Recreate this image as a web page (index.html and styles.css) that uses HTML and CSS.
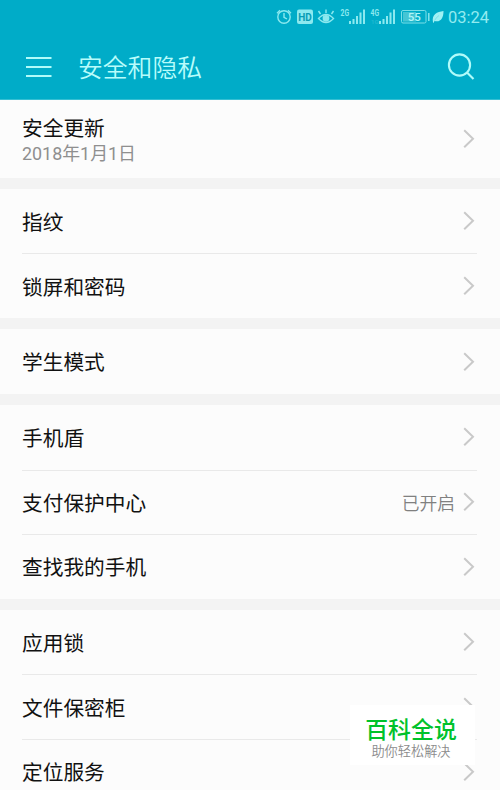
FILE: index.html
```
<!DOCTYPE html>
<html lang="zh-CN">
<head>
<meta charset="utf-8">
<title>安全和隐私</title>
<link rel="stylesheet" href="styles.css">
</head>
<body>
<svg class="defs" width="0" height="0"><defs>
<symbol id="chev" viewBox="0 0 12 20"><path d="M1.2 1.2 10 9.700 1.2 18.2" fill="none" stroke="#c9c9c9" stroke-width="2"/></symbol>
</defs></svg>
<header class="header">
<div class="status">
<svg class="icons" width="178" height="24" viewBox="270 5 178 24" fill="none" stroke="#8ce9ef" stroke-width="1.4">
<circle cx="284" cy="17" r="6.2"/><path d="M284 13v4.3l3 1.7M277 13.2l3-3M291 13.2l-3-3"/>
<rect x="297" y="9.5" width="16" height="14.5" rx="2" fill="#8ce9ef" stroke="none"/>
<text class="hd" x="298.2" y="20.500">HD</text>
<path d="M318.5 18.5q7.5-8 15 0-7.500 8-15 0ZM326 13V9.500M320.500 14l-2-3M331.500 14l2-3"/><circle cx="326" cy="18.300" r="2.700" fill="#8ce9ef"/>
<text class="net" x="340.500" y="16" textLength="8.500" lengthAdjust="spacingAndGlyphs">2G</text>
<path stroke-width="2" d="M350 24v-3M353.500 24v-5M357 24v-8M360.500 24V12.500M364 24V9.500"/>
<text class="net" x="370.500" y="16" textLength="8.500" lengthAdjust="spacingAndGlyphs">4G</text>
<text class="faint" x="371" y="23.500">1G</text>
<path stroke-width="2" d="M380 24v-3M383.500 24v-5M387 24v-8M390.500 24V12.500M394 24V9.500"/>
<rect x="401.500" y="10.500" width="24.500" height="12.500" rx="1.500" stroke-width="1" stroke="#7adfe8"/>
<rect x="403" y="12" width="13" height="9.500" fill="#45c5d4" stroke="none"/>
<text class="bat" x="407.800" y="21">55</text>
<path d="M428.800 13v8"/>
<path d="M433 22.500C431.500 14 437 12 443.500 11 443.500 18.500 440.500 22.500 434.500 21L433.500 23Z" fill="#a0f1f4" stroke="none"/>
<path d="M434.500 20.500q2-3.500 4.500-5" stroke="#5fd3df" stroke-width=".6"/>
</svg>
<span class="time">03:24</span>
</div>
<div class="bar">
<svg class="menu" width="26" height="22" viewBox="0 0 26 22"><path d="M0 2h25.500M0 11h25.500M0 20h25.500" stroke="#b0fbfa" stroke-width="2"/></svg>
<h1 class="title">安全和隐私</h1>
<svg class="search" width="28" height="28" viewBox="0 0 28 28" fill="none" stroke="#b0fbfa" stroke-width="2.100"><circle cx="12.500" cy="12" r="10.600"/><path d="m20 19.500 6.500 6.500"/></svg>
</div>
</header>
<main>
<section class="group">
<div class="row tall"><div class="stack"><div class="label">安全更新</div><div class="sub">2018年1月1日</div></div><svg class="chev"><use href="#chev"/></svg></div>
</section>
<section class="group">
<div class="row"><span class="label">指纹</span><svg class="chev"><use href="#chev"/></svg></div>
<div class="row"><span class="label">锁屏和密码</span><svg class="chev"><use href="#chev"/></svg></div>
</section>
<section class="group">
<div class="row"><span class="label">学生模式</span><svg class="chev"><use href="#chev"/></svg></div>
</section>
<section class="group">
<div class="row"><span class="label">手机盾</span><svg class="chev"><use href="#chev"/></svg></div>
<div class="row"><span class="label">支付保护中心</span><span class="value">已开启</span><svg class="chev"><use href="#chev"/></svg></div>
<div class="row"><span class="label">查找我的手机</span><svg class="chev"><use href="#chev"/></svg></div>
</section>
<section class="group">
<div class="row"><span class="label">应用锁</span><svg class="chev"><use href="#chev"/></svg></div>
<div class="row"><span class="label">文件保密柜</span><svg class="chev"><use href="#chev"/></svg></div>
<div class="row"><span class="label">定位服务</span><svg class="chev"><use href="#chev"/></svg></div>
</section>
</main>
<aside class="badge"><div class="brand">百科全说</div><div class="slogan">助你轻松解决</div></aside>
</body>
</html>
```
FILE: styles.css
```
* { box-sizing: border-box; }
body {
  margin: 0;
  position: relative;
  width: 500px;
  height: 790px;
  overflow: hidden;
  background: #f3f3f3;
  font-family: Roboto, "Noto Sans CJK SC", sans-serif;
}
.defs { display: block; }
.header { height: 100px; background: #00acc8; border-bottom: 1px solid #35bfd3; }
.status {
  height: 34px;
  display: flex;
  justify-content: flex-end;
  align-items: center;
  padding-right: 11px;
}
.icons { flex: none; }
.hd { font: bold 10px Roboto, sans-serif; fill: #079bb5; stroke: none; }
.net { font: bold 9.5px Roboto, sans-serif; fill: #8ce9ef; stroke: none; }
.faint { font: bold 6px Roboto, sans-serif; fill: #8ce9ef; stroke: none; opacity: .2; }
.bat { font: 500 11.5px Roboto, sans-serif; fill: #b0f5f7; stroke: none; }
.time { width: 41px; padding-top: 1px; font-size: 16.5px; line-height: 33px; color: #92ebf0; white-space: nowrap; }
.bar { height: 65px; display: flex; align-items: center; padding: 0 25px 0 26px; }
.title {
  margin: 0 0 0 26px;
  padding-top: 4px;
  flex: 1;
  font-size: 24.8px;
  font-weight: 350;
  line-height: 36px;
  color: #b8fcfb;
}
.group { background: #fcfcfc; margin-bottom: 11.3px; }
.row {
  height: 64.5px;
  margin: 0 23px 0 22px;
  padding-right: 2px;
  display: flex;
  align-items: center;
  justify-content: space-between;
}
.row + .row { border-top: 1px solid #e9e9e9; }
.row.tall { height: 77.7px; }
.label { flex: 1; padding-top: 3px; font-size: 20.7px; line-height: 28px; color: #111; }
.stack { padding-top: 5px; }
.tall .label { padding-top: 0; line-height: 26px; }
.sub { font-size: 17.9px; line-height: 24px; color: #8f8f8f; }
.value { font-size: 17.8px; font-weight: 350; color: #808080; margin-right: 8px; }
.chev { width: 12px; height: 20px; flex: none; }
.badge {
  position: absolute;
  left: 350px;
  top: 705px;
  width: 125px;
  height: 60px;
  padding: 11px 3px 0 0;
  background: #fff;
  text-align: center;
}
.brand { font-size: 22.9px; line-height: 29px; font-weight: 500; color: #00c22b; }
.slogan { font-size: 13.2px; line-height: 14px; color: #8b8b8b; font-weight: 350; }
```
